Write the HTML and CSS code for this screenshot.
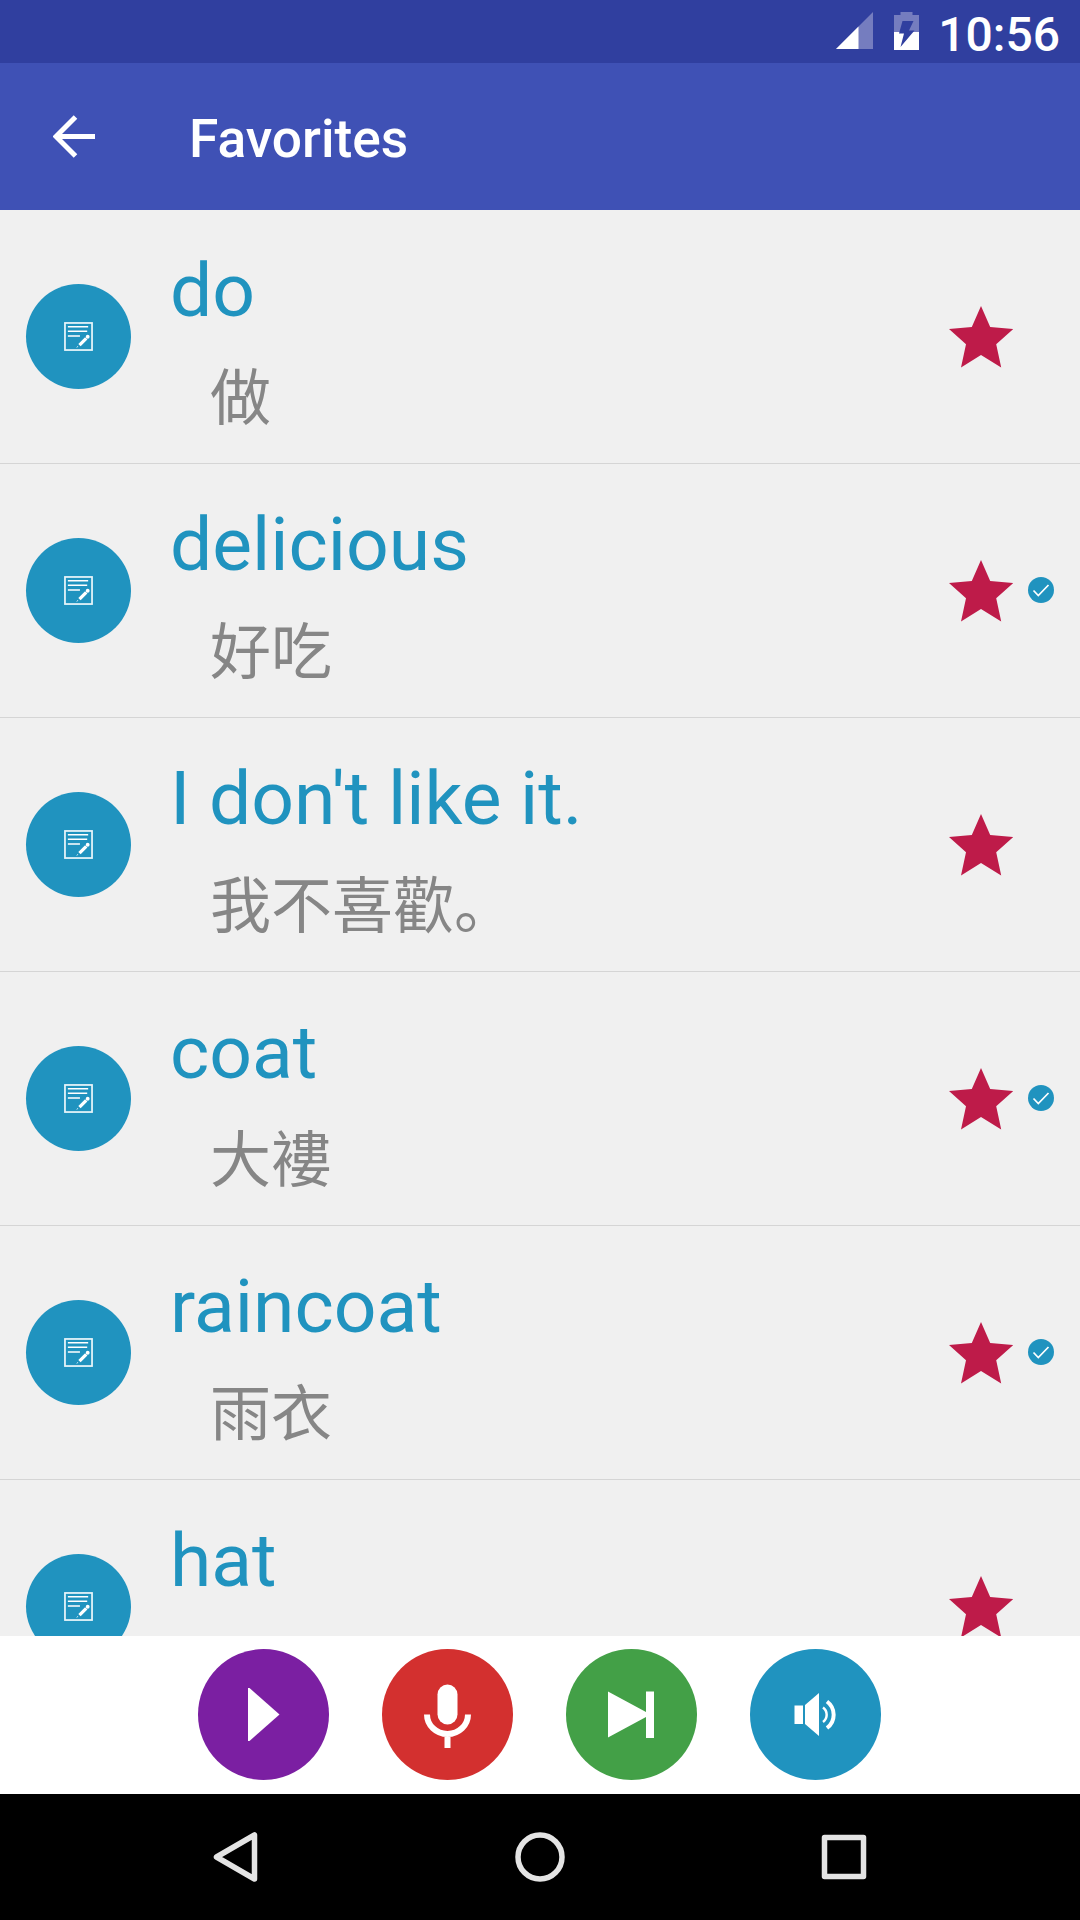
FILE: index.html
```html
<!DOCTYPE html>
<html lang="en">
<head>
    <meta charset="UTF-8">
    <meta name="viewport" content="width=device-width, initial-scale=1.0">
    <title>Favorites</title>
    <link rel="stylesheet" href="styles.css">
</head>
<body>
    <!-- shared icons -->
    <svg class="icons">
        <symbol id="note" viewBox="0 0 30 30">
            <rect x="1" y="1" width="28" height="28" fill="none" stroke="#e8f5fa" stroke-width="1.8"/>
            <path d="M4 5h21M4 9.6h20M4 14.5h12.5" fill="none" stroke="#fff" stroke-width="1.6"/>
            <path d="M16 24l7-7" fill="none" stroke="#fff" stroke-width="3.4"/>
            <circle cx="24.5" cy="15.2" r="2" fill="#fff"/>
            <path d="M13.3 26.5l1-1.5" fill="none" stroke="#fff" stroke-width="0.8"/>
        </symbol>
        <symbol id="star" viewBox="0 0 64 62">
            <path d="M32 0l9.2 21 23 2-17 15.2 5 23.3L32 49 12 61.5l5-23.3L0 23l22.8-2z" fill="#be1b49"/>
        </symbol>
        <symbol id="check" viewBox="0 0 26 26">
            <circle cx="13" cy="13" r="13" fill="#2093bf"/>
            <path d="M5.5 13.5l4.8 5L20.5 8" fill="none" stroke="#fff" stroke-width="1.7"/>
        </symbol>
    </svg>

    <div class="status-bar">
        <svg class="signal" viewBox="0 0 38 38">
            <path d="M37 0v37H0z" fill="#757dbf"/>
            <path d="M22.5 14.5V37H0z" fill="#fff"/>
        </svg>
        <svg class="battery" viewBox="0 0 25 38">
            <path d="M6.5 0h12v3H25v17H0V3h6.5z" fill="#757dbf"/>
            <path d="M0 20h25v18H0z" fill="#fff"/>
            <path d="M8.500 9h11l-4.500 9.500h5.500L6.500 35l3.500-13.500H5z" fill="#303f9f"/>
        </svg>
        <span class="time">10:56</span>
    </div>

    <div class="app-bar">
        <svg class="back" viewBox="0 0 43 43">
            <path d="M42 21.5H4M22.5 2L3 21.5 22.5 41" fill="none" stroke="#fff" stroke-width="5"/>
        </svg>
        <h1>Favorites</h1>
    </div>

    <ul class="words">
        <li>
            <span class="note"><svg><use href="#note"/></svg></span>
            <div class="word"><h2>do</h2><p>做</p></div>
            <svg class="star"><use href="#star"/></svg>
        </li>
        <li>
            <span class="note"><svg><use href="#note"/></svg></span>
            <div class="word"><h2>delicious</h2><p>好吃</p></div>
            <svg class="star"><use href="#star"/></svg>
            <svg class="check"><use href="#check"/></svg>
        </li>
        <li>
            <span class="note"><svg><use href="#note"/></svg></span>
            <div class="word"><h2>I don't like it.</h2><p>我不喜歡。</p></div>
            <svg class="star"><use href="#star"/></svg>
        </li>
        <li>
            <span class="note"><svg><use href="#note"/></svg></span>
            <div class="word"><h2>coat</h2><p>大褸</p></div>
            <svg class="star"><use href="#star"/></svg>
            <svg class="check"><use href="#check"/></svg>
        </li>
        <li>
            <span class="note"><svg><use href="#note"/></svg></span>
            <div class="word"><h2>raincoat</h2><p>雨衣</p></div>
            <svg class="star"><use href="#star"/></svg>
            <svg class="check"><use href="#check"/></svg>
        </li>
        <li>
            <span class="note"><svg><use href="#note"/></svg></span>
            <div class="word"><h2>hat</h2></div>
            <svg class="star"><use href="#star"/></svg>
        </li>
    </ul>

    <div class="controls">
        <button class="play">
            <svg viewBox="0 0 131 131"><path d="M50 39h1.5L81.5 65.5 51.5 92H50z" fill="#fff"/></svg>
        </button>
        <button class="record">
            <svg viewBox="0 0 131 131">
                <rect x="55.5" y="35.5" width="20" height="40" rx="10" fill="#fff"/>
                <path d="M45 65.5a20.5 19.5 0 0 0 41 0M65.5 85v14" fill="none" stroke="#fff" stroke-width="6"/>
            </svg>
        </button>
        <button class="next">
            <svg viewBox="0 0 131 131"><path d="M42 42.5L80 63V42.5h8V89h-8V68L42 88.5z" fill="#fff"/></svg>
        </button>
        <button class="sound">
            <svg viewBox="0 0 131 131">
                <path d="M44.5 56.5h8.5V75h-8.5zM55 56L69 44v43L55 75z" fill="#fff"/>
                <path d="M73 58.5a9 9 0 0 1 0 14.5" fill="none" stroke="#fff" stroke-width="2.5"/>
                <path d="M77 52.5a16.5 16.5 0 0 1 0 26.5" fill="none" stroke="#fff" stroke-width="4"/>
            </svg>
        </button>
    </div>

    <div class="nav-bar">
        <svg viewBox="0 0 50 50"><path d="M43.5 3v44L5.5 25z"/></svg>
        <svg viewBox="0 0 50 50"><circle cx="25" cy="25" r="22"/></svg>
        <svg viewBox="0 0 50 50"><rect x="5.5" y="5.5" width="39" height="39"/></svg>
    </div>
</body>
</html>
```
FILE: styles.css
```css
* {
    box-sizing: border-box;
    margin: 0;
    padding: 0;
}
body {
    display: flex;
    flex-direction: column;
    height: 1920px;
    width: 1080px;
    overflow: hidden;
    background-color: #f0f0f0;
    font-family: Roboto, "Noto Sans CJK SC", sans-serif;
}
svg {
    display: block;
    flex-shrink: 0;
}
.icons {
    display: none;
}
.status-bar {
    display: flex;
    flex-shrink: 0;
    justify-content: flex-end;
    height: 63px;
    padding-right: 20px;
    background-color: #303f9f;
    color: #ffffff;
}
.signal {
    width: 38px;
    height: 38px;
    margin: 12px 20px 0 0;
}
.battery {
    width: 25px;
    height: 38px;
    margin: 12px 19px 0 0;
}
.time {
    font-size: 48px;
    font-weight: 500;
    line-height: 70px;
}
.app-bar {
    display: flex;
    flex-shrink: 0;
    align-items: center;
    height: 147px;
    padding-left: 52.5px;
    background-color: #3f51b5;
}
.back {
    width: 43px;
    height: 43px;
}
.app-bar h1 {
    margin-left: 93.5px;
    padding-top: 5px;
    font-size: 53.3px;
    font-weight: 500;
    color: #ffffff;
}
.words {
    flex: 1;
    min-height: 0;
    overflow: hidden;
    list-style-type: none;
}
.words li {
    display: flex;
    align-items: center;
    height: 254px;
    padding: 0 26px;
    border-bottom: 1px solid #d5d5d5;
}
.note {
    display: flex;
    flex-shrink: 0;
    align-items: center;
    justify-content: center;
    width: 105px;
    height: 105px;
    border-radius: 50%;
    background-color: #2093bf;
}
.note svg {
    width: 29px;
    height: 29px;
}
.word {
    flex: 1;
    height: 100%;
    padding: 36px 0 0 39px;
}
.word h2 {
    font-size: 75px;
    font-weight: 400;
    line-height: 88px;
    color: #2093bf;
}
.word p {
    margin-top: 21px;
    padding-left: 40px;
    font-size: 61px;
    line-height: 88px;
    color: #868686;
}
.star {
    width: 64px;
    height: 62px;
    margin-right: 41.5px;
}
.check {
    width: 26px;
    height: 26px;
    margin: 0 0 1px -26px;
}
.controls {
    display: flex;
    flex-shrink: 0;
    justify-content: center;
    gap: 53px;
    height: 158px;
    padding: 13px 1px 0 0;
    background-color: #ffffff;
}
.controls button {
    width: 131px;
    height: 131px;
    border: none;
    border-radius: 50%;
}
.play {
    background-color: #7b1fa2;
}
.record {
    background-color: #d3302f;
}
.next {
    background-color: #43a047;
}
.sound {
    background-color: #2093bf;
}
.nav-bar {
    display: flex;
    flex-shrink: 0;
    align-items: center;
    justify-content: center;
    gap: 254px;
    height: 126px;
    background-color: #000000;
}
.nav-bar svg {
    width: 50px;
    height: 50px;
    fill: none;
    stroke: #e4e4e4;
    stroke-width: 5.5;
    stroke-linejoin: round;
}
```
